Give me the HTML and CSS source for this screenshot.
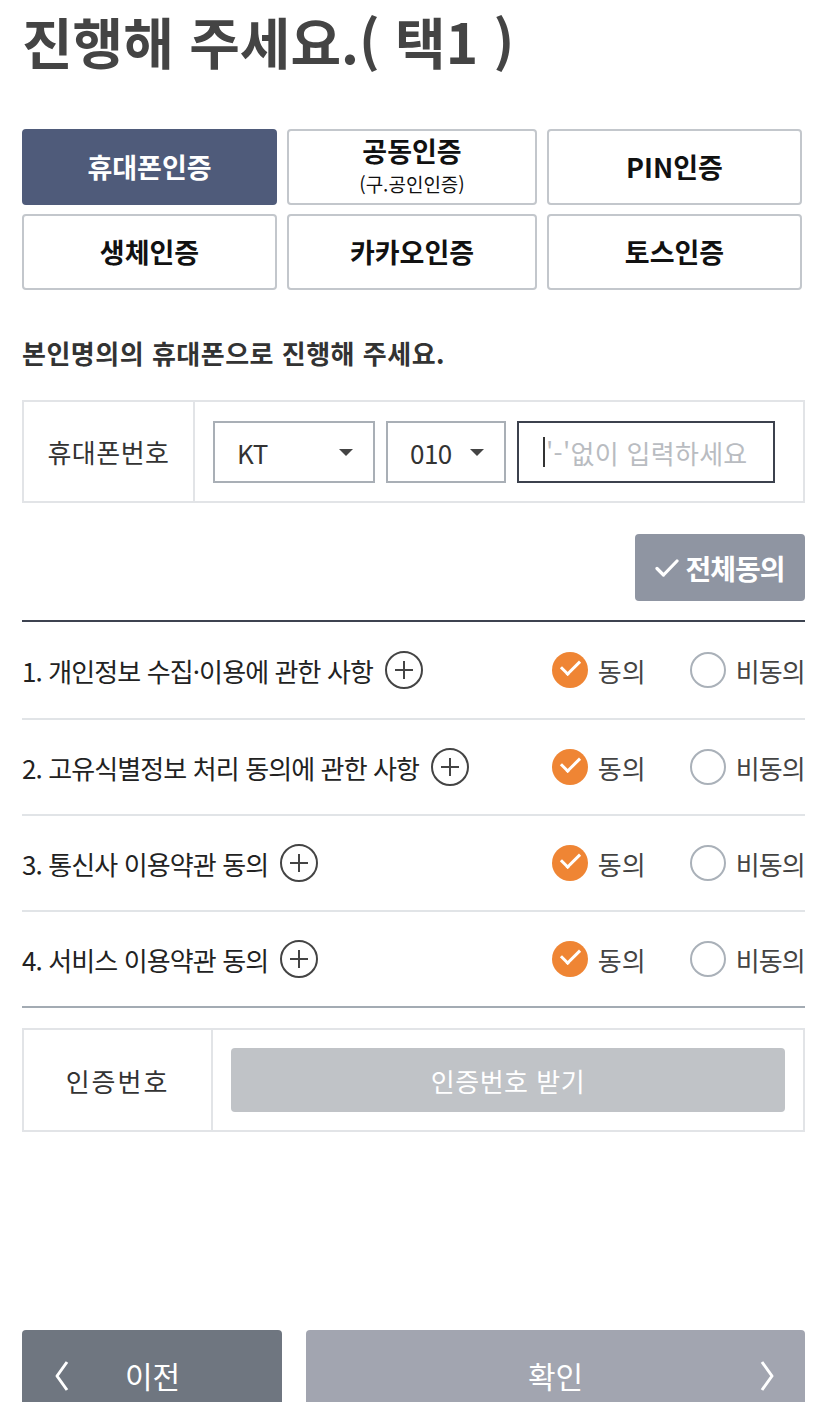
FILE: index.html
```html
<!DOCTYPE html>
<html lang="ko">
<head>
    <title>본인인증</title>
    <meta name="viewport" content="width=device-width, initial-scale=1">
    <meta charset="UTF-8">
    <link rel="stylesheet" href="styles.css">
</head>
<body>
    <div class="page">
        <h1 class="title">진행해 주세요.( 택1 )</h1>

        <div class="auth-grid">
            <button class="auth-btn active">휴대폰인증</button>
            <button class="auth-btn two-line">공동인증<small>(구.공인인증)</small></button>
            <button class="auth-btn">PIN인증</button>
            <button class="auth-btn">생체인증</button>
            <button class="auth-btn">카카오인증</button>
            <button class="auth-btn">토스인증</button>
        </div>

        <p class="guide">본인명의의 휴대폰으로 진행해 주세요.</p>

        <div class="form-box phone-box">
            <div class="box-label">휴대폰번호</div>
            <div class="box-body">
                <div class="select carrier">KT<span class="caret"></span></div>
                <div class="select prefix">010<span class="caret"></span></div>
                <div class="num-input"><span class="cursor"></span><span class="placeholder">'-'없이 입력하세요</span></div>
            </div>
        </div>

        <div class="all-row">
            <button class="all-agree">
                <svg width="24" height="20" viewBox="0 0 24 20"><path d="M2 10.5 L8.5 17 L22 3" fill="none" stroke="#fff" stroke-width="3.2" stroke-linecap="round" stroke-linejoin="round"/></svg>
                전체동의
            </button>
        </div>

        <ul class="terms">
            <li class="term">
                <span class="term-title">1. 개인정보 수집·이용에 관한 사항</span>
                <span class="plus"></span>
                <span class="choice yes"><span class="dot"></span>동의</span>
                <span class="choice no"><span class="dot"></span>비동의</span>
            </li>
            <li class="term">
                <span class="term-title">2. 고유식별정보 처리 동의에 관한 사항</span>
                <span class="plus"></span>
                <span class="choice yes"><span class="dot"></span>동의</span>
                <span class="choice no"><span class="dot"></span>비동의</span>
            </li>
            <li class="term">
                <span class="term-title">3. 통신사 이용약관 동의</span>
                <span class="plus"></span>
                <span class="choice yes"><span class="dot"></span>동의</span>
                <span class="choice no"><span class="dot"></span>비동의</span>
            </li>
            <li class="term">
                <span class="term-title">4. 서비스 이용약관 동의</span>
                <span class="plus"></span>
                <span class="choice yes"><span class="dot"></span>동의</span>
                <span class="choice no"><span class="dot"></span>비동의</span>
            </li>
        </ul>

        <div class="form-box code-box">
            <div class="box-label">인증번호</div>
            <div class="box-body">
                <button class="code-btn">인증번호 받기</button>
            </div>
        </div>

        <div class="bottom">
            <button class="nav-btn prev">
                <svg class="chev" width="16" height="32" viewBox="0 0 16 32"><polyline points="13,2 3,16 13,30" fill="none" stroke="#fff" stroke-width="3" stroke-linejoin="round"/></svg>
                이전
            </button>
            <button class="nav-btn next">
                확인
                <svg class="chev" width="16" height="32" viewBox="0 0 16 32"><polyline points="3,2 13,16 3,30" fill="none" stroke="#fff" stroke-width="3" stroke-linejoin="round"/></svg>
            </button>
        </div>
    </div>
</body>
</html>
```

FILE: styles.css
```css
body {
    margin: 0;
    background-color: #fff;
    color: #333;
    font-family: "Noto Sans CJK KR", "Noto Sans", sans-serif;
}
button {
    font-family: inherit;
    cursor: pointer;
}
.page {
    width: 783px;
    padding: 0 13px 0 22px;
}
.title {
    font-size: 55px;
    font-weight: 700;
    letter-spacing: 0;
    line-height: 80px;
    margin: 0;
    color: #444;
}
.auth-grid {
    display: grid;
    grid-template-columns: 255px 250px 255px;
    gap: 9px 10px;
    margin-top: 49px;
}
.auth-btn {
    height: 76px;
    background: #fff;
    border: 2px solid #c3c7cc;
    border-radius: 4px;
    font-size: 27px;
    font-weight: 700;
    letter-spacing: 0;
    color: #111;
    display: flex;
    flex-direction: column;
    align-items: center;
    justify-content: center;
    line-height: 1.45;
    padding: 0;
}
.auth-btn.two-line {
    padding-bottom: 6px;
}
.auth-btn small {
    display: block;
    font-size: 19px;
    font-weight: 400;
    letter-spacing: 0;
    line-height: 1.45;
}
.auth-btn.active {
    background: #4f5b7a;
    border-color: #4f5b7a;
    color: #fff;
}
.guide {
    font-size: 26px;
    font-weight: 700;
    letter-spacing: 0.5px;
    margin: 44px 0 29px;
    color: #333;
}
.form-box {
    display: flex;
    border: 2px solid #e2e4e7;
}
.box-label {
    width: 169px;
    border-right: 2px solid #e2e4e7;
    display: flex;
    align-items: center;
    justify-content: center;
    font-size: 26px;
    letter-spacing: 0.5px;
    color: #333;
}
.box-body {
    flex: 1;
    display: flex;
    gap: 11px;
    padding: 19px 28px 18px 18px;
}
.select {
    height: 58px;
    border: 2px solid #a9afb6;
    display: flex;
    align-items: center;
    justify-content: space-between;
    padding: 0 20px 0 22px;
    font-size: 26px;
    letter-spacing: -0.5px;
    color: #333;
}
.carrier {
    width: 116px;
}
.prefix {
    width: 74px;
}
.caret {
    width: 0;
    height: 0;
    border-left: 7px solid transparent;
    border-right: 7px solid transparent;
    border-top: 7px solid #444;
}
.num-input {
    flex: 1;
    height: 58px;
    border: 2px solid #3c414d;
    display: flex;
    align-items: center;
    padding-left: 24px;
    font-size: 26px;
    letter-spacing: 0.3px;
}
.cursor {
    width: 2px;
    height: 30px;
    background: #333;
    margin-right: 1px;
}
.placeholder {
    color: #b9bcc1;
}
.all-row {
    display: flex;
    justify-content: flex-end;
    margin-top: 31px;
}
.all-agree {
    width: 170px;
    height: 67px;
    background: #8f95a2;
    border: none;
    border-radius: 4px;
    color: #fff;
    font-size: 28px;
    font-weight: 700;
    letter-spacing: -1px;
    display: flex;
    align-items: center;
    justify-content: center;
    gap: 6px;
}
.terms {
    list-style: none;
    padding: 0;
    margin: 19px 0 0;
    border-top: 2px solid #3d4350;
    border-bottom: 2px solid #a3abb3;
}
.term {
    height: 94px;
    display: flex;
    align-items: center;
    border-top: 2px solid #e1e4e7;
    font-size: 26px;
    letter-spacing: -0.9px;
    color: #222;
}
.term:first-child {
    border-top: none;
    height: 96px;
}
.plus {
    width: 34px;
    height: 34px;
    border: 2px solid #444;
    border-radius: 50%;
    margin-left: 12px;
    position: relative;
}
.plus::before,
.plus::after {
    content: "";
    position: absolute;
    background: #444;
    left: 50%;
    top: 50%;
}
.plus::before {
    width: 18px;
    height: 2px;
    transform: translate(-50%, -50%);
}
.plus::after {
    width: 2px;
    height: 18px;
    transform: translate(-50%, -50%);
}
.choice {
    display: flex;
    align-items: center;
    gap: 10px;
    color: #444;
    letter-spacing: 0;
}
.choice.yes {
    margin-left: auto;
}
.choice.no {
    margin-left: 44px;
    letter-spacing: -0.8px;
}
.dot {
    width: 36px;
    height: 36px;
    border-radius: 50%;
    box-sizing: border-box;
    position: relative;
}
.yes .dot {
    background: #ef8534;
}
.yes .dot::after {
    content: "";
    position: absolute;
    left: 9px;
    top: 8px;
    width: 16px;
    height: 8px;
    border-left: 3px solid #fff;
    border-bottom: 3px solid #fff;
    transform: rotate(-45deg);
}
.no .dot {
    border: 2px solid #aab1b9;
}
.code-box {
    margin-top: 20px;
}
.code-box .box-label {
    width: 187px;
    letter-spacing: 2px;
}
.code-box .box-body {
    padding: 18px;
}
.code-btn {
    flex: 1;
    height: 64px;
    background: #c0c3c7;
    border: none;
    border-radius: 4px;
    color: #fff;
    font-size: 26px;
    letter-spacing: 0.5px;
}
.bottom {
    display: flex;
    gap: 24px;
    margin-top: 198px;
}
.nav-btn {
    height: 96px;
    border: none;
    border-radius: 4px 4px 0 0;
    color: #fff;
    font-size: 30px;
    letter-spacing: 0;
    display: flex;
    align-items: flex-start;
    padding-top: 23px;
}
.prev {
    width: 260px;
    background: #6f7680;
    padding-left: 32px;
}
.prev .chev {
    margin: 7px 55px 0 0;
}
.next {
    flex: 1;
    background: #a2a5b0;
    justify-content: center;
    position: relative;
}
.next .chev {
    position: absolute;
    right: 30px;
    top: 30px;
}
```
